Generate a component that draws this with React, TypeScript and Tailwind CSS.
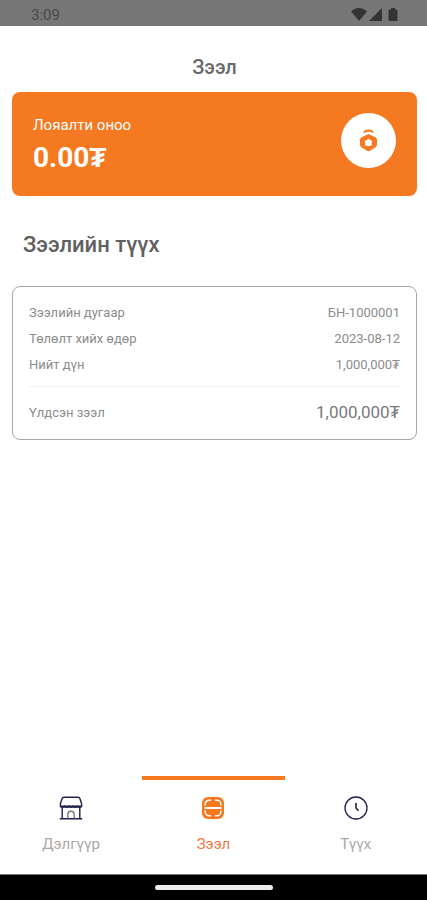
import { clsx } from "clsx";

const details = [
  { label: "Зээлийн дугаар", value: "БН-1000001" },
  { label: "Төлөлт хийх өдөр", value: "2023-08-12" },
  { label: "Нийт дүн", value: "1,000,000₮" },
];

const StoreIcon = () => (
  <svg className="size-6" viewBox="0 0 24 24" fill="none" stroke="#20204a" strokeWidth="1.4" strokeLinejoin="round" aria-hidden="true">
    <path d="M5 1.200h14q1.500 0 2 1.500l1.600 5.100v2.400H1.400V7.800L3 2.700q.5-1.500 2-1.500z" />
    <path d="M1.400 10c.4 1.800 3.800 1.800 4.200 0 .4 1.800 3.800 1.800 4.200 0 .4 1.800 4 1.800 4.400 0 .4 1.800 3.800 1.800 4.200 0 .4 1.800 3.800 1.800 4.200 0" />
    <path d="M3.200 11.500v11M20.800 11.500v11M.8 22.800h22.400" />
    <path d="M8.800 22.500v-4a3.200 3.200 0 0 1 6.400 0v4" stroke="#77777f" />
  </svg>
);

const LoanIcon = () => (
  <svg className="size-6" viewBox="0 0 24 24" fill="none" aria-hidden="true">
    <rect x="1" y="1" width="22" height="22" rx="6" fill="#f47920" />
    <path
      d="M4.200 9.500V8.200a4 4 0 0 1 4-4h1.600M14.200 4.200h1.600a4 4 0 0 1 4 4v1.300M19.800 14.500v1.300a4 4 0 0 1-4 4h-1.600M9.800 19.800H8.200a4 4 0 0 1-4-4v-1.300"
      stroke="#fff"
      strokeWidth="1.5"
    />
    <path d="M3.500 12h17" stroke="#fff" strokeWidth="2" />
  </svg>
);

const ClockIcon = () => (
  <svg className="size-6" viewBox="0 0 24 24" fill="none" stroke="#20204a" aria-hidden="true">
    <circle cx="12" cy="12" r="11" strokeWidth="1.3" />
    <path d="M12 7v5l2.500 2.800" strokeWidth="1.6" />
  </svg>
);

const MedalIcon = () => (
  <svg className="size-6" viewBox="0 0 24 24" fill="#f47920" aria-hidden="true">
    <path d="M6 4C6.800-.6 16.200-.6 17 4l-2.600-.7c-1.300-.9-4.500-.9-5.800 0z" />
    <path
      d="M11.500 5l6.800 3.200a3 3 0 0 1 1.700 2.700v4.700a3 3 0 0 1-1.500 2.600L13 21.800a3 3 0 0 1-3 0l-5.500-3.600A3 3 0 0 1 3 15.600v-4.700a3 3 0 0 1 1.700-2.700z"
    />
    <path
      d="M11.500 9.600l1.600 1.500 2.300.8-.7 2.200.2 2.300-3.400.7-3.400-.7.200-2.300-.7-2.200 2.300-.8z"
      fill="#fff"
    />
  </svg>
);

const tabs = [
  { label: "Дэлгүүр", icon: StoreIcon, href: "#store" },
  { label: "Зээл", icon: LoanIcon, href: "#loan", active: true },
  { label: "Түүх", icon: ClockIcon, href: "#history" },
];

const StatusBar = () => (
  <div className="flex h-[26px] items-end justify-between bg-[#777777] pr-7 pl-[31px]">
    <span className="text-[15px] leading-[22px] text-[#484848]">3:09</span>
    <div className="mb-1 flex items-center text-[#343434]">
      <svg className="h-4 w-[18px]" viewBox="0 0 18 16" fill="currentColor" aria-hidden="true">
        <path d="M0 5.500C4 .8 12 .8 16 5.500L8 15z" />
      </svg>
      <svg className="h-4 w-[18px]" viewBox="0 0 18 16" fill="currentColor" aria-hidden="true">
        <path d="M13 2v13H0z" />
      </svg>
      <svg className="h-4 w-3" viewBox="0 0 12 16" fill="currentColor" aria-hidden="true">
        <path d="M4 2h4v1.500h1.500a1 1 0 0 1 1 1V14a1 1 0 0 1-1 1h-7a1 1 0 0 1-1-1V4.500a1 1 0 0 1 1-1H4z" />
      </svg>
    </div>
  </div>
);

const TabBar = () => (
  <nav className="grid grid-cols-3">
    {tabs.map((tab) => (
      <a
        key={tab.href}
        href={tab.href}
        aria-current={tab.active ? "page" : undefined}
        className={clsx(
          "flex h-[98px] flex-col items-center border-t-4 pt-4",
          tab.active ? "border-[#f47920] text-[#f4763c]" : "border-transparent text-[#a8a8a8]"
        )}
      >
        <tab.icon />
        <span className="mt-3 text-[15px] leading-6">{tab.label}</span>
      </a>
    ))}
  </nav>
);

export default function App() {
  return (
    <div className="flex min-h-screen flex-col bg-white font-['Roboto',sans-serif]">
      <StatusBar />
      <main className="flex-1 pr-[10px] pl-3">
        <h1 className="pt-7 pb-3 text-center text-xl leading-[26px] font-medium text-[#6a6a6a]">
          Зээл
        </h1>

        <section className="flex h-26 items-start justify-between rounded-lg bg-[#f47920] px-[21px] pt-[21px] text-white">
          <div>
            <p className="text-[15px] leading-6">Лояалти оноо</p>
            <p className="text-[28px] leading-[42px] font-bold">0.00₮</p>
          </div>
          <div className="flex size-[55px] items-center justify-center rounded-full bg-white">
            <MedalIcon />
          </div>
        </section>

        <h2 className="mt-9 px-[11px] text-[22px] leading-[26px] font-medium text-[#606060]">
          Зээлийн түүх
        </h2>

        <section className="mt-7 rounded-lg border border-[#a8a8a8] px-4 text-[#8c8c8c]">
          <dl className="border-b border-[#f0f0f0] pt-[13px] pb-2">
            {details.map((row) => (
              <div key={row.label} className="flex justify-between text-[13px] leading-[26px]">
                <dt>{row.label}</dt>
                <dd>{row.value}</dd>
              </div>
            ))}
          </dl>
          <dl className="flex h-[52px] items-center justify-between">
            <dt className="text-[13px]">Үлдсэн зээл</dt>
            <dd className="text-[17px] text-[#7a7a7a]">1,000,000₮</dd>
          </dl>
        </section>
      </main>
      <TabBar />
      <div className="flex h-[26px] items-center justify-center border-t border-[#777777] bg-black">
        <div className="h-[5px] w-[118px] rounded-full bg-[#ececec]" />
      </div>
    </div>
  );
}
